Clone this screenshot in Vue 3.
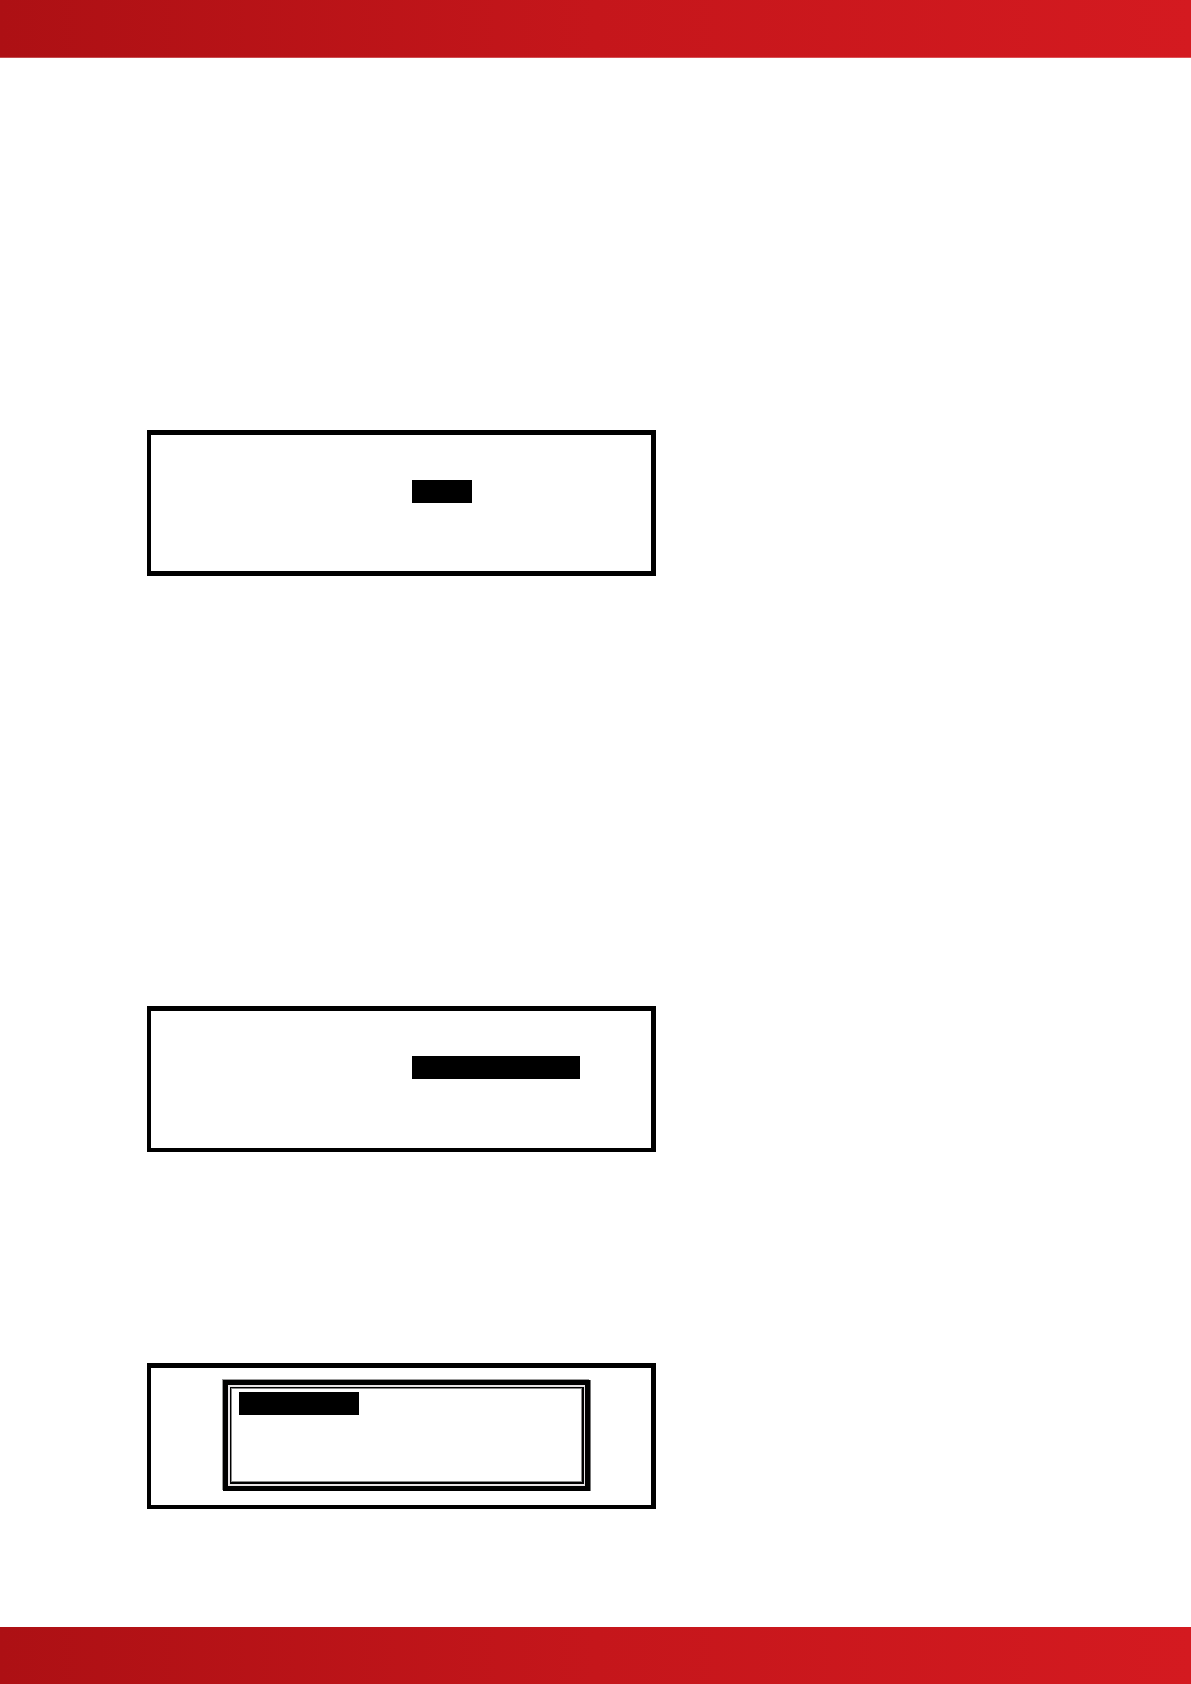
<script setup>
const panels = [
  { name: 'short', kind: 'field' },
  { name: 'long', kind: 'field' },
  { name: 'menu', kind: 'menu' },
]
</script>

<template>
  <div class="page">
    <header class="band band-top"></header>
    <main class="content">
      <section
        v-for="panel in panels"
        :key="panel.name"
        class="panel"
        :class="panel.name"
      >
        <div v-if="panel.kind === 'menu'" class="frame">
          <div class="frame-inner">
            <div class="highlight"></div>
          </div>
        </div>
        <div v-else class="highlight"></div>
      </section>
    </main>
    <footer class="band"></footer>
  </div>
</template>

<style>
body {
  margin: 0;
  background: #fff;
}
</style>

<style scoped>
.page {
  display: flex;
  flex-direction: column;
  min-height: 100vh;
  font-family: "Liberation Sans", sans-serif;
}

.band {
  box-sizing: border-box;
  flex: none;
  height: 57px;
  background: linear-gradient(90deg, #ad1014 0%, #c5161b 50%, #d41a20 100%);
}

.band-top {
  height: 58px;
  border-bottom: 1px solid rgba(255, 255, 255, 0.25);
}

.content {
  flex: 1;
  padding: 372px 24px 118px 147px;
}

.panel {
  box-sizing: border-box;
  max-width: 509px;
  min-height: 146px;
  border: solid #000;
  border-width: 5px 5px 4px 4px;
}

.short {
  border-bottom-width: 5px;
}

.short,
.long {
  padding: 45px 0 0 261px;
}

.long {
  margin-top: 430px;
}

.menu {
  margin-top: 211px;
  padding: 12px 61px 14px 72px;
}

.highlight {
  width: 60px;
  height: 23px;
  background: #000;
}

.long .highlight {
  width: 168px;
}

.menu .highlight {
  width: 120px;
}

.frame {
  box-sizing: border-box;
  display: flex;
  height: 111px;
  padding: 2px 1px 2px 2px;
  border: 5px solid #000;
  background: #e8e4e6;
  box-shadow: -1px -1px #999, 1px 0 #777;
}

.frame-inner {
  flex: 1;
  padding: 4px 0 0 8px;
  border: solid #000;
  border-width: 1px 2px 2px 1px;
  background: #fff;
  box-shadow: inset 0 0 0 1px #888;
}
</style>
